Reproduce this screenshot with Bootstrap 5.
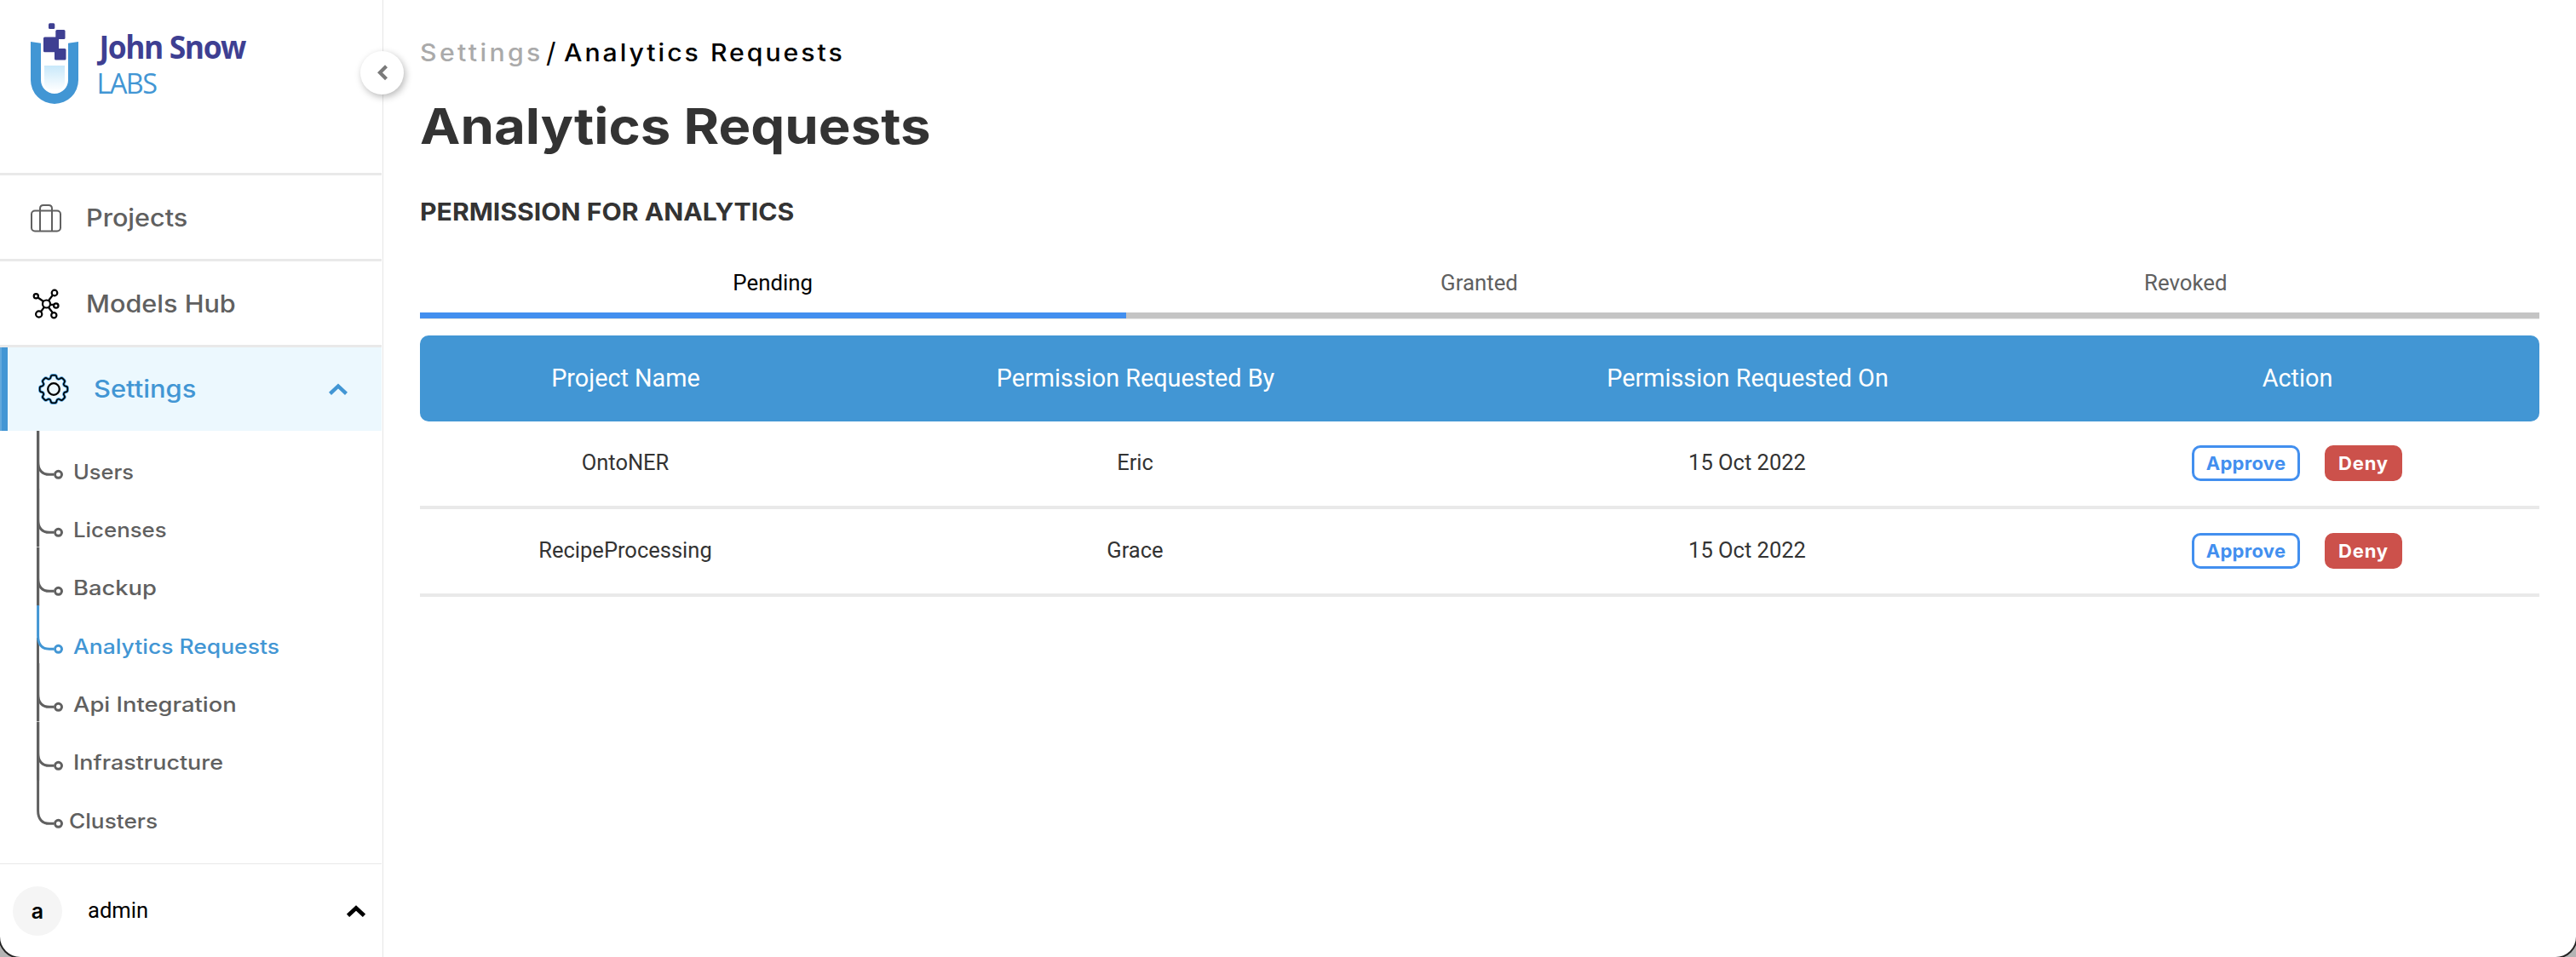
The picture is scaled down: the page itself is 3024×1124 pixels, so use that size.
<!doctype html>
<html lang="en">
<head>
<meta charset="utf-8">
<title>Analytics Requests</title>
<link rel="stylesheet" href="https://cdn.jsdelivr.net/npm/bootstrap@5.3.0/dist/css/bootstrap.min.css">
<style>
  :root { --brand: #4296d4; --accent: #428fef; --ink: #333; --muted: #606060; --line: #e9e9e9; }
  body { background: #b4b4b4; font-family: Inter, "Liberation Sans", sans-serif; color: var(--ink); overflow: hidden; }
  .window { height: 1124px; background: #fff; border-radius: 0 0 24px 24px; box-shadow: 0 0 0 2px #222; }
  /* widens the letterforms without opening gaps between them */
  .stretch { display: inline-block; transform: scaleX(var(--w, 1.1)); transform-origin: 0 50%; white-space: nowrap; }
  .side { width: 450px; border-right: 1px solid #e6e6e6; padding-right: 1px; flex: none; }
  .brand-area { height: 203px; padding: 20px 0 0 30px; }
  .collapse-btn { left: 423px; top: 60px; width: 51px; height: 51px; box-shadow: 2px 3px 8px rgba(0,0,0,.28); }
  .side-link { height: 101px; border-top: 3px solid var(--line); color: var(--muted); font-size: 28px; font-weight: 500; padding-left: 36px; padding-top: 1px; line-height: 1; }
  .side-link svg { flex: none; margin-right: 27px; }
  .side-link.current { color: var(--brand); background: #ecf8fe; padding-top: 0; box-shadow: inset 2px 0 #62a8dc, inset 9px 0 var(--brand); }
  .side-link.current svg.gear { margin-left: 8px; margin-right: 28px; }
  .side-link.current svg.chev { margin: 0 40px 0 auto; }
  .sub-link { height: 68.35px; padding-left: 43px; color: var(--muted); font-size: 24px; font-weight: 500; line-height: 1; }
  .sub-link span { padding-top: 29px; margin-left: 10px; }
  .sub-link svg { flex: none; overflow: visible; }
  .sub-link.chosen { color: var(--brand); }
  .sub-link.final span { margin-left: 5px; }
  .w-106 { --w: 1.06; } .w-107 { --w: 1.075; } .w-109 { --w: 1.093; } .w-110 { --w: 1.103; } .w-112 { --w: 1.12; } .w-114 { --w: 1.14; }
  .user-bar { height: 110px; border-top: 1px solid var(--line); padding: 1px 19px 0 15px; color: #000; }
  .avatar { width: 58px; height: 58px; background: #f5f5f5; font-size: 25px; font-weight: 600; line-height: 1; }
  .user-name { font: 400 25.6px/1 Roboto, sans-serif; margin-left: 30px; }
  .content { padding: 40px 43px 0; min-width: 0; }
  .crumbs { height: 44px; font-size: 28px; font-weight: 500; line-height: 44px; letter-spacing: 2.75px; color: #000; --w: 1.08; }
  .crumbs .parent { color: #aaa; width: 148px; letter-spacing: 3.1px; }
  .crumbs .slash { letter-spacing: 0; font-size: 32px; font-weight: 400; width: 21px; }
  h1 { font-size: 58px; font-weight: 700; line-height: 70px; margin: 29px 0 49px; --w: 1.095; }
  h2 { font-size: 28px; font-weight: 700; line-height: 34px; margin: 0 0 31px; --w: 1.078; }
  .tab-strip { border-bottom: 1px solid var(--line); margin-bottom: 19px; font: 400 25.8px/1 Roboto, sans-serif; }
  .tab-strip .nav-link { height: 77px; border: 0; border-bottom: 7px solid #c4c4c4; border-radius: 0; color: var(--muted); padding: 1px 1px 0 0; }
  .tab-strip .nav-link.active { color: #000; border-color: var(--accent); }
  .requests { border-collapse: separate; border-spacing: 0; table-layout: fixed; font-family: Roboto, sans-serif; text-align: center; }
  .requests th { background: var(--brand); color: #fff; height: 101px; font-size: 28.8px; font-weight: 400; line-height: 1; padding: 0; }
  .requests th:first-child { border-radius: 10px 0 0 10px; }
  .requests th:last-child { border-radius: 0 10px 10px 0; }
  .requests td { height: 103px; border-bottom: 4px solid var(--line); font-size: 25.5px; line-height: 1; padding: 0 1px 2px 0; }
  .act { height: 42px; border: 3px solid var(--accent); border-radius: 10px; font: 700 22px/1 Inter, sans-serif; padding: 0; color: var(--accent); }
  .act.yes { width: 127px; letter-spacing: .3px; }
  .act.no { width: 91px; background: #cc514b; border-color: #cc514b; color: #fff; letter-spacing: .8px; }
  .pair { gap: 29px; }
</style>
</head>
<body>
<div class="window d-flex overflow-hidden position-relative">
  <aside class="side d-flex flex-column">
    <div class="brand-area">
      <svg width="270" height="110" viewBox="30 20 270 110" aria-label="John Snow Labs">
        <defs><linearGradient id="fluid" x2="0" y2="1"><stop stop-color="#c8e8fa"/><stop offset="1" stop-color="#fff"/></linearGradient></defs>
        <path fill="#4296d4" d="M36 49l12 1.7V94a16 16 0 0 0 32 0V50.7L92 49v45a28 28 0 0 1-56 0z"/>
        <path fill="url(#fluid)" d="M52 77h24v20a12 10 0 0 1-24 0z"/>
        <g fill="#3e3f92"><rect x="57" y="27.300" width="7.300" height="6.700" rx="1.500"/><rect x="65.300" y="35" width="11.200" height="11" rx="1.500"/><rect x="51" y="43.500" width="18" height="17.700" rx="1.500"/><rect x="64" y="57" width="13.500" height="13.500" rx="1.500"/></g>
        <text x="116.500" y="68.800" font-family="Open Sans, sans-serif" font-weight="700" font-size="37" fill="#3e3f92" textLength="171.500" lengthAdjust="spacingAndGlyphs" letter-spacing="-1.500">John Snow</text>
        <text x="113.500" y="110.300" font-family="Open Sans, sans-serif" font-size="32" fill="#4296d4" textLength="70" lengthAdjust="spacingAndGlyphs" letter-spacing="-1.500">LABS</text>
      </svg>
    </div>
    <nav>
      <a class="side-link d-flex align-items-center text-decoration-none">
        <svg width="38" height="36" viewBox="0 0 38 36" fill="none" stroke="#606060" stroke-width="2"><rect x="1" y="9.500" width="34" height="24" rx="4"/><path d="M11 33.500V7q0-4 4-4h6q4 0 4 4v26.500"/></svg>
        <span class="stretch w-109">Projects</span>
      </a>
      <a class="side-link d-flex align-items-center text-decoration-none">
        <svg width="38" height="36" viewBox="36 338 38 36" fill="none" stroke="#000" stroke-width="2.200"><path d="M44.500 348.500l6.500 4.500M62 345.500l-5 6.500M59 356.800h4M48 365l4-5.300M57 360l5 6.500"/><circle cx="54.500" cy="356" r="4.500"/><circle cx="42.300" cy="346.800" r="2.600"/><circle cx="64" cy="343" r="3.300"/><circle cx="65.800" cy="358" r="2.700"/><circle cx="45.700" cy="368" r="3.600"/><circle cx="63.300" cy="369.300" r="3.100"/></svg>
        <span class="stretch w-109">Models Hub</span>
      </a>
      <a class="side-link current d-flex align-items-center text-decoration-none">
        <svg class="gear" width="38" height="38" viewBox="-19 -19 38 38" fill="none">
          <defs><path id="tooth" d="M-4.900-11.800C-3.800-12.400-3.600-13-3.400-14.200C-3.200-15.800-2.400-16.300-1.200-16.300H1.200C2.400-16.300 3.200-15.800 3.400-14.200C3.600-13 3.800-12.400 4.900-11.800"/>
          <g id="teeth"><use href="#tooth"/><use href="#tooth" transform="rotate(45)"/><use href="#tooth" transform="rotate(90)"/><use href="#tooth" transform="rotate(135)"/><use href="#tooth" transform="rotate(180)"/><use href="#tooth" transform="rotate(225)"/><use href="#tooth" transform="rotate(270)"/><use href="#tooth" transform="rotate(315)"/></g></defs>
          <use href="#teeth" stroke="#4296d4" stroke-width="3.200"/><use href="#teeth" stroke="#000" stroke-width="1.600"/><circle r="6.800" stroke="#000" stroke-width="2.300"/>
        </svg>
        <span class="stretch w-110">Settings</span>
        <svg class="chev" width="22" height="14" viewBox="0 0 22 14" fill="none" stroke="#4296d4" stroke-width="4.400"><path d="M1.500 12.300L11 3.500l9.500 8.800"/></svg>
      </a>
      <svg class="d-none"><defs>
        <g id="branch" fill="none" stroke-width="3"><path d="M1.600 0V36C1.600 46 6.500 51.300 15 51.300H20"/><circle cx="25.500" cy="51.300" r="4"/></g>
        <path id="trunk" d="M1.600 0V68.400" stroke="#606060" stroke-width="3.200"/>
        <path id="stub" d="M1.500 38V68.400" stroke="#606060" stroke-width="3"/>
      </defs></svg>
      <a class="sub-link d-flex align-items-center text-decoration-none"><svg width="33" height="68.350"><use href="#trunk"/><use href="#branch" stroke="#606060"/></svg><span class="stretch w-106">Users</span></a>
      <a class="sub-link d-flex align-items-center text-decoration-none"><svg width="33" height="68.350"><use href="#trunk"/><use href="#branch" stroke="#606060"/></svg><span class="stretch w-107">Licenses</span></a>
      <a class="sub-link d-flex align-items-center text-decoration-none"><svg width="33" height="68.350"><use href="#trunk"/><use href="#branch" stroke="#606060"/></svg><span class="stretch w-114">Backup</span></a>
      <a class="sub-link chosen d-flex align-items-center text-decoration-none"><svg width="33" height="68.350"><use href="#stub"/><use href="#branch" stroke="#4296d4"/></svg><span class="stretch w-110">Analytics Requests</span></a>
      <a class="sub-link d-flex align-items-center text-decoration-none"><svg width="33" height="68.350"><use href="#trunk"/><use href="#branch" stroke="#606060"/></svg><span class="stretch w-114">Api Integration</span></a>
      <a class="sub-link d-flex align-items-center text-decoration-none"><svg width="33" height="68.350"><use href="#trunk"/><use href="#branch" stroke="#606060"/></svg><span class="stretch w-112">Infrastructure</span></a>
      <a class="sub-link final d-flex align-items-center text-decoration-none"><svg width="33" height="68.350"><use href="#branch" stroke="#606060"/></svg><span class="stretch w-109">Clusters</span></a>
    </nav>
    <div class="user-bar d-flex align-items-center mt-auto">
      <span class="avatar rounded-circle d-flex align-items-center justify-content-center">a</span>
      <span class="user-name">admin</span>
      <svg class="ms-auto" width="22" height="14" viewBox="0 0 22 14" fill="none" stroke="#000" stroke-width="4.800"><path d="M1.500 12.300L11 3.500l9.500 8.800"/></svg>
    </div>
  </aside>
  <button class="collapse-btn btn bg-white rounded-circle position-absolute p-0 border-0 d-flex align-items-center justify-content-center" aria-label="Collapse">
    <svg width="14" height="20" viewBox="0 0 14 20" fill="none" stroke="#7a7a7a" stroke-width="4.200"><path d="M11.500 1.700L4 9.200L11.500 16.700"/></svg>
  </button>
  <main class="content flex-grow-1">
    <div class="crumbs d-flex"><span class="parent"><span class="stretch">Settings</span></span><span class="slash">/</span><span class="stretch">Analytics Requests</span></div>
    <h1><span class="stretch">Analytics Requests</span></h1>
    <h2><span class="stretch">PERMISSION FOR ANALYTICS</span></h2>
    <ul class="tab-strip nav nav-fill flex-nowrap">
      <li class="nav-item w-100"><a class="nav-link active d-flex align-items-center justify-content-center">Pending</a></li>
      <li class="nav-item w-100"><a class="nav-link d-flex align-items-center justify-content-center">Granted</a></li>
      <li class="nav-item w-100"><a class="nav-link d-flex align-items-center justify-content-center">Revoked</a></li>
    </ul>
    <table class="requests w-100">
      <colgroup><col width="483"><col width="714"><col width="723"><col></colgroup>
      <thead><tr><th>Project Name</th><th>Permission Requested By</th><th>Permission Requested On</th><th>Action</th></tr></thead>
      <tbody>
        <tr><td>OntoNER</td><td>Eric</td><td>15 Oct 2022</td><td><div class="pair d-flex justify-content-center"><button class="act yes btn">Approve</button><button class="act no btn">Deny</button></div></td></tr>
        <tr><td>RecipeProcessing</td><td>Grace</td><td>15 Oct 2022</td><td><div class="pair d-flex justify-content-center"><button class="act yes btn">Approve</button><button class="act no btn">Deny</button></div></td></tr>
      </tbody>
    </table>
  </main>
</div>
<script src="https://cdn.jsdelivr.net/npm/bootstrap@5.3.0/dist/js/bootstrap.bundle.min.js"></script>
</body>
</html>
